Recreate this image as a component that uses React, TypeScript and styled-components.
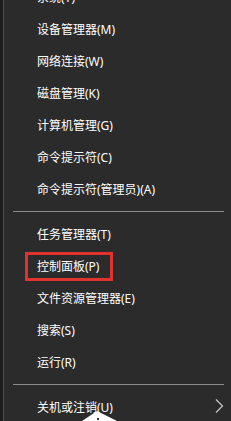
import React from "react";
import styled, { createGlobalStyle } from "styled-components";

const Global = createGlobalStyle`
  html, body { margin: 0; padding: 0; background: #2b2b2b; }
  body { width: 231px; height: 421px; overflow: hidden; }
`;

const Frame = styled.div`
  position: relative;
  display: flex;
  width: 231px;
  height: 421px;
  overflow: hidden;
  background: #2b2b2b;
`;

const EdgeStrip = styled.div`
  flex: 0 0 3px;
  background: #1c1c1c;
  border-right: 1px solid #4e4e4e;
`;

const Menu = styled.ul`
  flex: 1;
  list-style: none;
  margin: -19px 0 0 0;
  padding: 0;
  font-family: "Noto Sans", "Noto Sans CJK SC", sans-serif;
  font-size: 12px;
  color: #ffffff;
`;

const Row = styled.li`
  position: relative;
  display: flex;
  align-items: center;
  height: 32px;
  padding-left: 33px;
  white-space: nowrap;
`;

const Label = styled.span<{ $marked?: boolean }>`
  display: inline-block;
  line-height: 23px;
  ${(p) =>
    p.$marked
      ? `
    margin-left: -12px;
    padding: 0 11px 0 9px;
    border: 3px solid #e2322f;
  `
      : ""}
`;

const Separator = styled.li`
  height: 13px;
  display: flex;
  align-items: center;
  padding: 0 7px 0 9px;
  &::after {
    content: "";
    flex: 1;
    height: 1px;
    background: #8a8a8a;
  }
`;

const Chevron = styled.svg`
  position: absolute;
  right: 7px;
  top: 8px;
`;

const Cursor = styled.svg`
  position: absolute;
  left: 82px;
  top: 411px;
`;

type Item = { label: string; marked?: boolean; sub?: boolean } | "sep";

const items: Item[] = [
  { label: "系统(Y)" },
  { label: "设备管理器(M)" },
  { label: "网络连接(W)" },
  { label: "磁盘管理(K)" },
  { label: "计算机管理(G)" },
  { label: "命令提示符(C)" },
  { label: "命令提示符(管理员)(A)" },
  "sep",
  { label: "任务管理器(T)" },
  { label: "控制面板(P)", marked: true },
  { label: "文件资源管理器(E)" },
  { label: "搜索(S)" },
  { label: "运行(R)" },
  "sep",
  { label: "关机或注销(U)", sub: true },
];

export default function App() {
  return (
    <>
      <Global />
      <Frame>
        <EdgeStrip />
        <Menu>
          {items.map((it, i) =>
            it === "sep" ? (
              <Separator key={i} />
            ) : (
              <Row key={i}>
                <Label $marked={it.marked}>{it.label}</Label>
                {it.sub && (
                  <Chevron width="9" height="14" viewBox="0 0 9 14">
                    <path d="M1 0.5 L7.5 7 L1 13.5" fill="none" stroke="#c8c8c8" strokeWidth="1.2" />
                  </Chevron>
                )}
              </Row>
            )
          )}
        </Menu>
        <Cursor width="36" height="10" viewBox="0 0 36 10">
          <polygon points="15,0 0,10 35,10" fill="#ffffff" />
          <rect x="15" y="7" width="2" height="2" fill="#333" />
        </Cursor>
      </Frame>
    </>
  );
}
